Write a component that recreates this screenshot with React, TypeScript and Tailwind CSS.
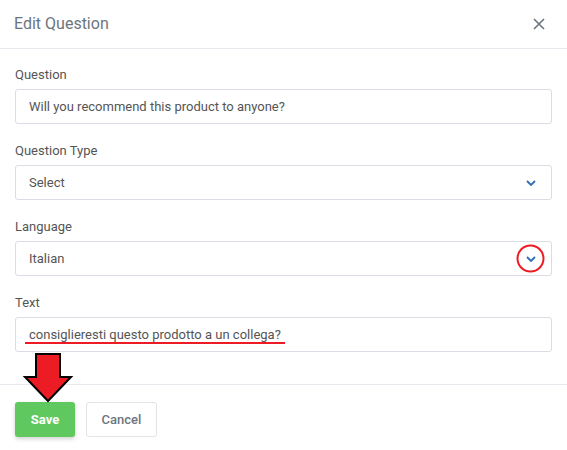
import React from "react";

function Chevron() {
  return (
    <svg width="10" height="6" viewBox="0 0 10 6" className="shrink-0">
      <path d="M1 1l4 4 4-4" fill="none" stroke="#2f6db5" strokeWidth="1.8" />
    </svg>
  );
}

function Field({ label, value, select }: { label: string; value: string; select?: boolean }) {
  return (
    <div className="mb-[17px]">
      <div className="text-[13px] leading-[20px] text-[#555] mb-[4px]">{label}</div>
      <div className="h-[35px] border border-[#dcdce4] rounded-[3px] flex items-center justify-between pl-[13px] pr-[15px] text-[13px] text-[#555]">
        <span>{value}</span>
        {select && <Chevron />}
      </div>
    </div>
  );
}

export default function App() {
  return (
    <div className="relative w-[567px] h-[450px] bg-white overflow-hidden" style={{ fontFamily: "Roboto, 'Liberation Sans', sans-serif" }}>
      <div className="h-[49px] border-b border-[#e8e8ee] flex items-center justify-between pl-[14px] pr-[22px]">
        <h2 className="text-[16px] text-[#6c757d]">Edit Question</h2>
        <svg width="12" height="12" viewBox="0 0 12 12">
          <path d="M1 1l10 10M11 1L1 11" stroke="#6c757d" strokeWidth="1.6" />
        </svg>
      </div>

      <div className="px-[15px] pt-[16px] pb-[15px] border-b border-[#e8e8ee]">
        <Field label="Question" value="Will you recommend this product to anyone?" />
        <Field label="Question Type" value="Select" select />
        <Field label="Language" value="Italian" select />
        <Field label="Text" value="consiglieresti questo prodotto a un collega?" />
      </div>

      <div className="flex gap-[11px] px-[15px] pt-[17px]">
        <button className="h-[35px] w-[60px] rounded-[3px] bg-[#5fc95f] text-white text-[13px] font-bold shadow-[0_2px_4px_rgba(0,0,0,0.18)]">
          Save
        </button>
        <button className="h-[35px] w-[71px] rounded-[3px] border border-[#e3e3e8] bg-white text-[#6c757d] text-[13px] font-medium">
          Cancel
        </button>
      </div>

      <svg className="absolute left-0 top-0 pointer-events-none" width="567" height="450">
        <line x1="25" y1="343" x2="285" y2="343" stroke="#ed1c24" strokeWidth="2" />
        <circle cx="530.5" cy="258.5" r="13" fill="none" stroke="#ed1c24" strokeWidth="2" />
        <polygon points="36,354 60,354 60,377 71,377 48,401 25,377 36,377" fill="#ed1c24" stroke="#000" strokeWidth="2" strokeLinejoin="miter" />
      </svg>
    </div>
  );
}
